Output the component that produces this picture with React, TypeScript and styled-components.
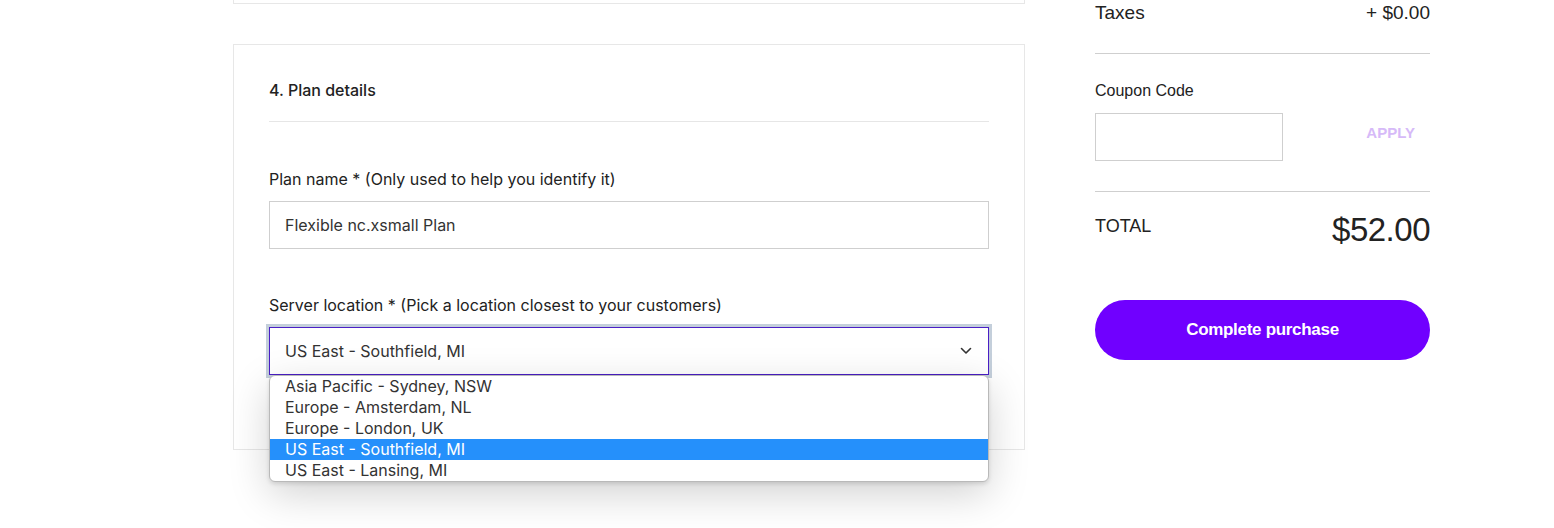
import React from "react";
import styled, { createGlobalStyle } from "styled-components";

const Global = createGlobalStyle`
  html, body { margin: 0; padding: 0; background: #fff; }
  body { font-family: Inter, "Noto Sans", sans-serif; color: #222; overflow: hidden; }
  * { box-sizing: border-box; }
`;

const Page = styled.div`
  width: 1554px;
  height: 528px;
  display: flex;
  align-items: flex-start;
  padding-left: 233px;
  gap: 70px;
`;

const LeftCol = styled.div`
  width: 792px;
  display: flex;
  flex-direction: column;
  gap: 40px;
`;

const PrevCard = styled.div`
  height: 4px;
  border: 1px solid #e7e7e7;
  border-top: none;
`;

const Card = styled.section`
  border: 1px solid #e7e7e7;
  padding: 0 35px 74px 35px;
  display: flex;
  flex-direction: column;
`;

const CardHeader = styled.h2`
  margin: 0;
  padding: 35px 0 21px;
  border-bottom: 1px solid #e6e6e6;
  font-size: 16px;
  line-height: 20px;
  font-weight: 500;
  color: #222;
`;

const Field = styled.div<{ $top: number }>`
  margin-top: ${(p) => p.$top}px;
  display: flex;
  flex-direction: column;
  gap: 12px;
  position: relative;
`;

const Label = styled.label`
  font-size: 16px;
  line-height: 20px;
  color: #222;
`;

const TextInput = styled.div`
  height: 48px;
  border: 1px solid #cfcfcf;
  padding: 0 15px;
  display: flex;
  align-items: center;
  font-size: 16px;
  color: #333;
`;

const SelectBox = styled.div`
  height: 48px;
  border: 1px solid #4a1fc6;
  box-shadow: 0 0 0 3px #c4cfdb;
  padding: 0 16px 0 15px;
  display: flex;
  align-items: center;
  justify-content: space-between;
  font-size: 16px;
  color: #333;
`;

const Dropdown = styled.ul`
  position: absolute;
  left: 0;
  right: 0;
  top: 80px;
  margin: 0;
  padding: 0;
  list-style: none;
  background: #fff;
  border: 1px solid #b9b9b9;
  border-radius: 6px;
  overflow: hidden;
  box-shadow: 0 12px 40px rgba(0, 0, 0, 0.18), 0 2px 4px rgba(0, 0, 0, 0.12);
  z-index: 5;
`;

const Option = styled.li<{ $active?: boolean }>`
  height: 21px;
  line-height: 21px;
  padding-left: 15px;
  font-size: 16px;
  color: ${(p) => (p.$active ? "#fff" : "#333")};
  background: ${(p) => (p.$active ? "#2590fb" : "transparent")};
`;

const RightCol = styled.aside`
  width: 335px;
  display: flex;
  flex-direction: column;
  font-family: "Liberation Sans", Arial, sans-serif;
`;

const Row = styled.div`
  display: flex;
  justify-content: space-between;
  align-items: center;
`;

const TaxRow = styled(Row)`
  padding: 2px 0 29px;
  border-bottom: 1px solid #cfcfcf;
  font-size: 19px;
  line-height: 22px;
  color: #222;
`;

const CouponBlock = styled.div`
  padding: 28px 0 30px;
  border-bottom: 1px solid #cfcfcf;
  display: flex;
  flex-direction: column;
  gap: 13px;
`;

const CouponLabel = styled.div`
  font-size: 16px;
  line-height: 18px;
  color: #222;
`;

const CouponInput = styled.div`
  width: 188px;
  height: 48px;
  border: 1px solid #cfcfcf;
`;

const ApplyButton = styled.span`
  font-size: 15px;
  font-weight: 700;
  color: #d6baf8;
  margin: 0 15px 10px 0;
`;

const TotalRow = styled(Row)`
  padding-top: 22px;
  align-items: flex-start;
`;

const TotalLabel = styled.span`
  font-size: 18px;
  line-height: 24px;
  color: #222;
`;

const TotalValue = styled.span`
  font-size: 33px;
  line-height: 32px;
  color: #222;
  letter-spacing: -0.5px;
`;

const PurchaseButton = styled.button`
  margin-top: 54px;
  height: 60px;
  border: none;
  border-radius: 30px;
  background: #7000ff;
  color: #fff;
  font-family: "Liberation Sans", Arial, sans-serif;
  font-weight: 700;
  font-size: 17px;
  letter-spacing: -0.3px;
`;

const options = [
  "Asia Pacific - Sydney, NSW",
  "Europe - Amsterdam, NL",
  "Europe - London, UK",
  "US East - Southfield, MI",
  "US East - Lansing, MI",
];

export default function App() {
  return (
    <>
      <Global />
      <Page>
        <LeftCol>
          <PrevCard />
          <Card>
            <CardHeader>4. Plan details</CardHeader>
            <Field $top={47}>
              <Label>Plan name * (Only used to help you identify it)</Label>
              <TextInput>Flexible nc.xsmall Plan</TextInput>
            </Field>
            <Field $top={46}>
              <Label>Server location * (Pick a location closest to your customers)</Label>
              <SelectBox>
                <span>US East - Southfield, MI</span>
                <svg width="12" height="8" viewBox="0 0 12 8" fill="none">
                  <path d="M1.5 1.5L6 6L10.5 1.5" stroke="#333" strokeWidth="1.6" strokeLinecap="round" strokeLinejoin="round" />
                </svg>
              </SelectBox>
              <Dropdown>
                {options.map((o, i) => (
                  <Option key={o} $active={i === 3}>
                    {o}
                  </Option>
                ))}
              </Dropdown>
            </Field>
          </Card>
        </LeftCol>
        <RightCol>
          <TaxRow>
            <span>Taxes</span>
            <span>+ $0.00</span>
          </TaxRow>
          <CouponBlock>
            <CouponLabel>Coupon Code</CouponLabel>
            <Row>
              <CouponInput />
              <ApplyButton>APPLY</ApplyButton>
            </Row>
          </CouponBlock>
          <TotalRow>
            <TotalLabel>TOTAL</TotalLabel>
            <TotalValue>$52.00</TotalValue>
          </TotalRow>
          <PurchaseButton>Complete purchase</PurchaseButton>
        </RightCol>
      </Page>
    </>
  );
}
